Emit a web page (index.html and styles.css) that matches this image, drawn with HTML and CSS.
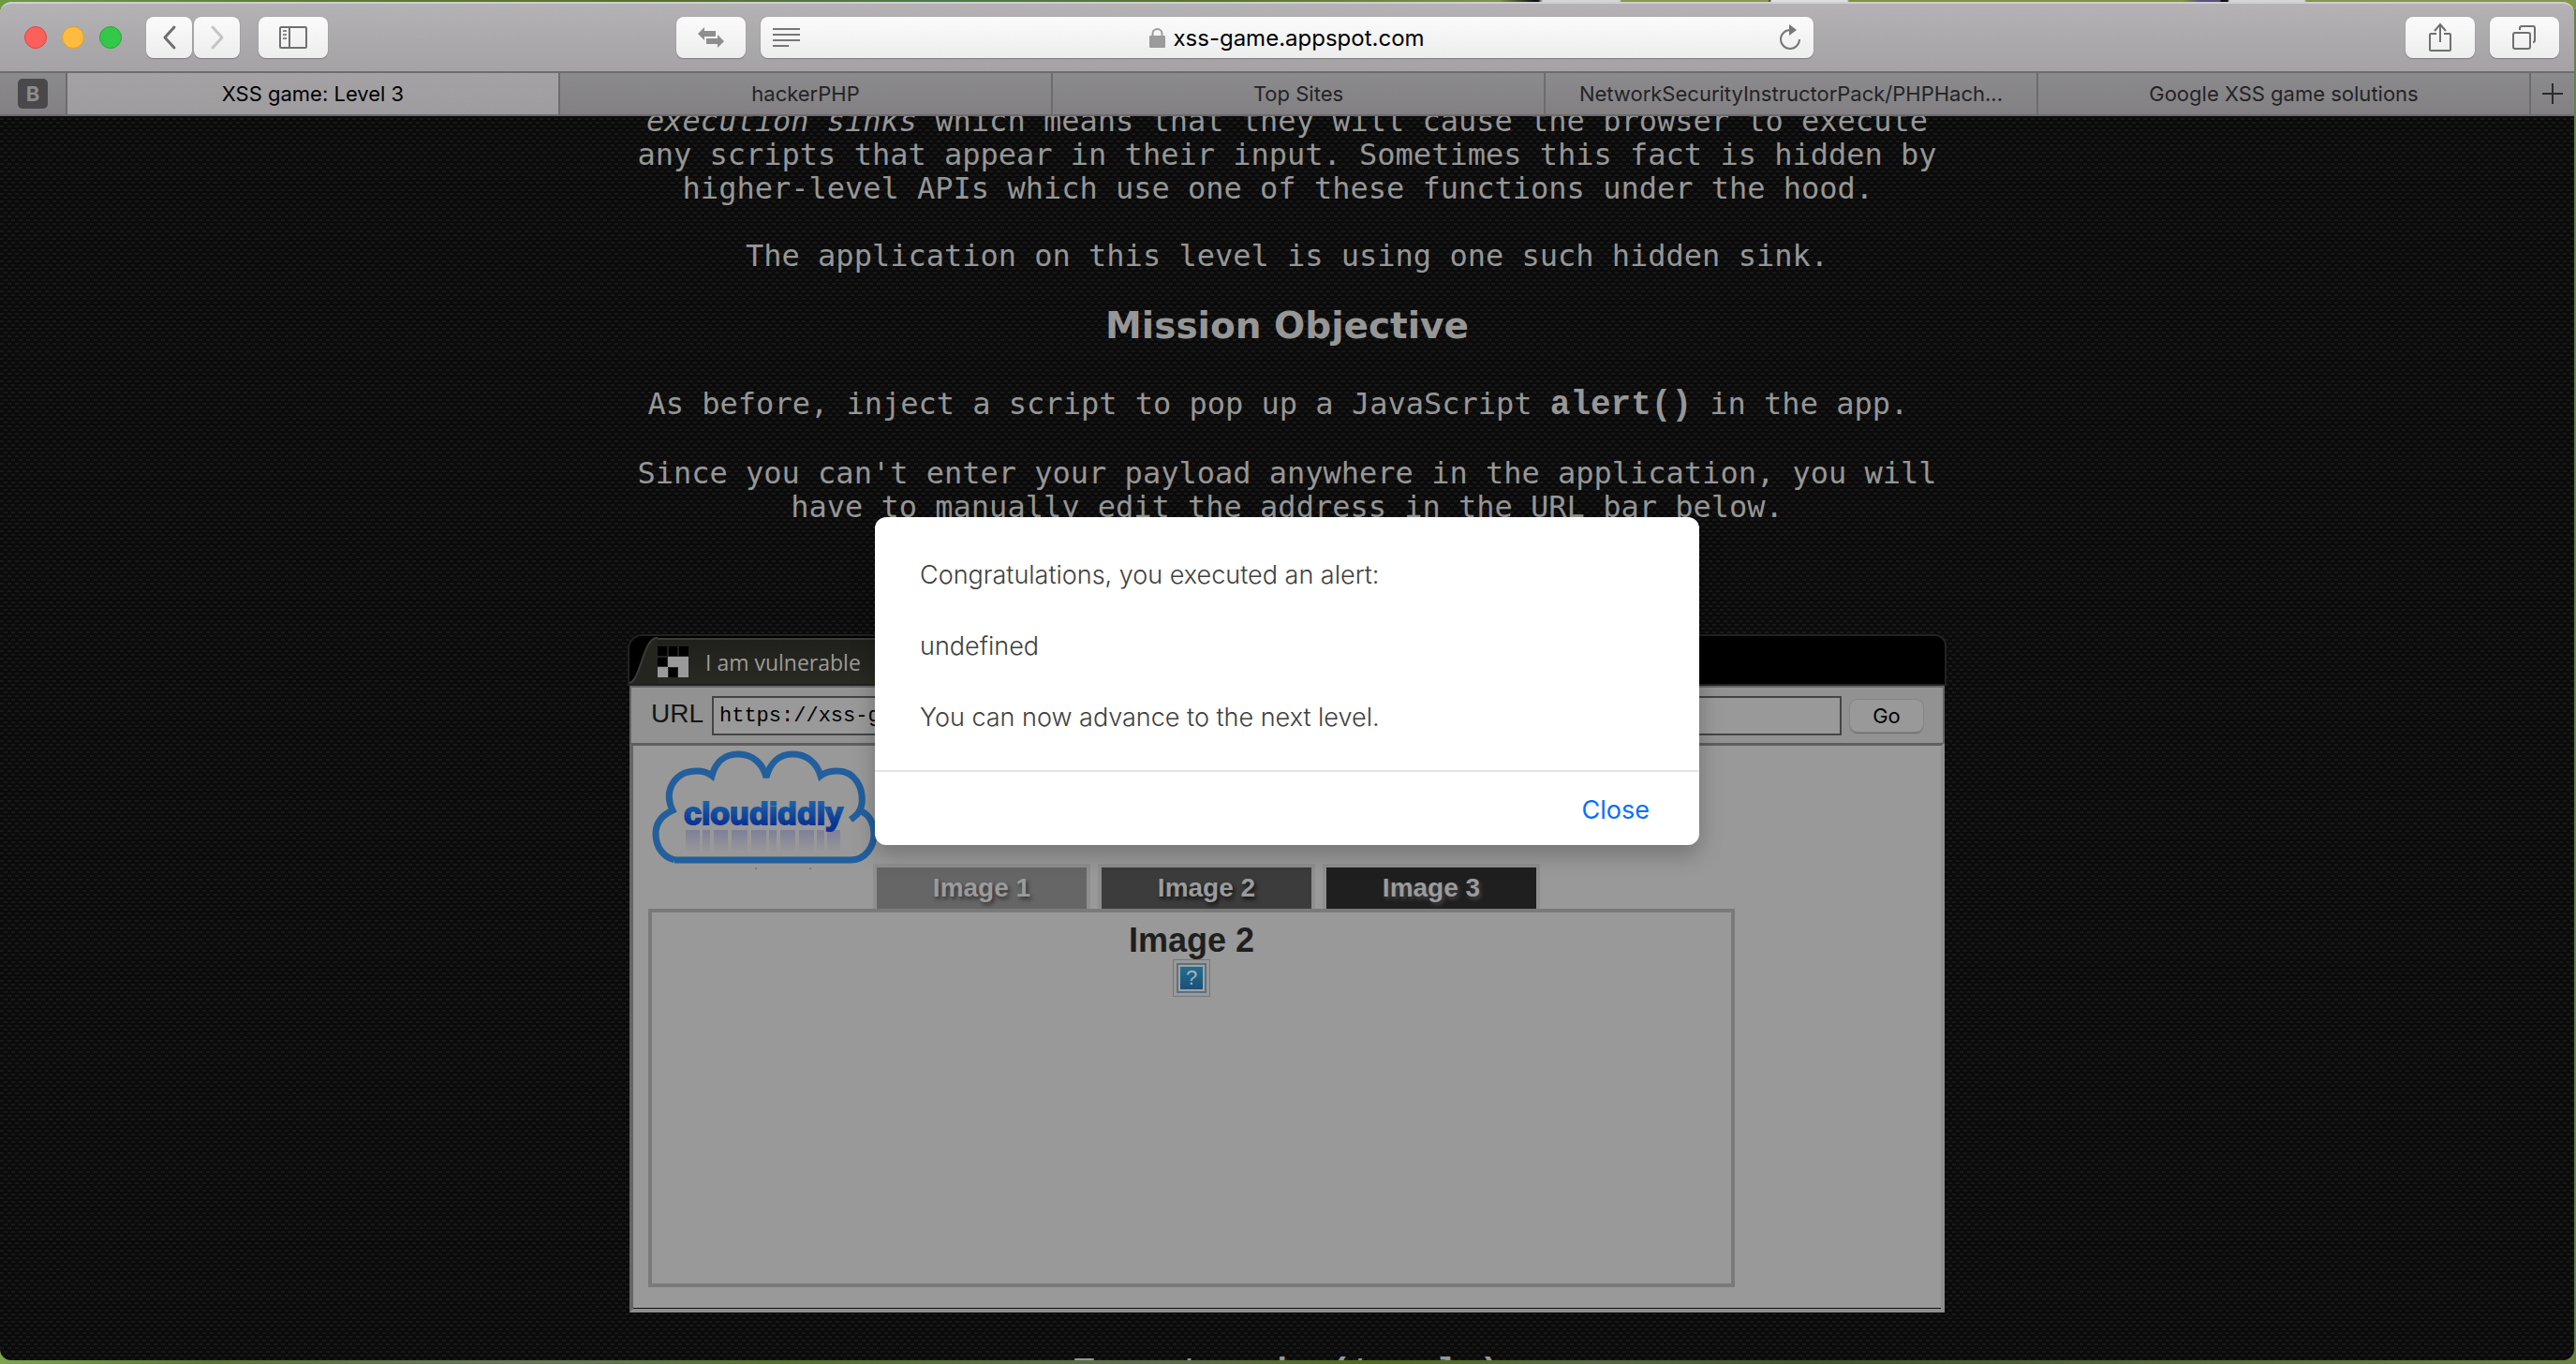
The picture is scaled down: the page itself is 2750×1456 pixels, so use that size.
FILE: index.html
```html
<!DOCTYPE html>
<html lang="en">
<head>
<meta charset="utf-8">
<title>XSS game: Level 3</title>
<link rel="stylesheet" href="styles.css">
</head>
<body>
<div class="window">
  <header class="toolbar">
    <div class="toolbar-side">
      <div class="lights">
        <span class="light light-close"></span>
        <span class="light light-min"></span>
        <span class="light light-max"></span>
      </div>
      <div class="nav">
        <button class="tool tool-nav" type="button" aria-label="Back">
          <svg width="16" height="26" viewBox="0 0 16 26" fill="none" stroke="#6f6f6f" stroke-width="3" stroke-linecap="round" stroke-linejoin="round"><path d="M13 2 3 13l10 11"/></svg>
        </button>
        <button class="tool tool-nav" type="button" aria-label="Forward">
          <svg width="16" height="26" viewBox="0 0 16 26" fill="none" stroke="#c4c4c4" stroke-width="3" stroke-linecap="round" stroke-linejoin="round"><path d="m3 2 10 11L3 24"/></svg>
        </button>
      </div>
      <button class="tool" type="button" aria-label="Show sidebar">
        <svg width="30" height="24" viewBox="0 0 30 24" fill="none" stroke="#6f6f6f" stroke-width="2"><rect x="1" y="1" width="28" height="22" rx="1"/><path d="M11 1v22"/><path d="M4 5h4M4 9h4M4 13h4" stroke="#8a8a8a"/></svg>
      </button>
      <button class="tool tool-swap" type="button" aria-label="Switch page">
        <svg width="28" height="22" viewBox="0 0 28 22" fill="#8e8e8e"><path d="M0 7 7 0v4h12v6H7v4z"/><path d="M28 15l-7 7v-4H9v-6h12V8z"/></svg>
      </button>
    </div>
    <div class="address">
      <button class="address-icon" type="button" aria-label="Reader view">
        <svg width="29" height="20" viewBox="0 0 29 20" stroke="#777" stroke-width="2"><path d="M0 1h29M0 7h29M0 13h29M0 19h17"/></svg>
      </button>
      <label class="address-text">
        <svg width="17" height="21" viewBox="0 0 17 21"><path d="M3.500 9V6a5 5 0 0 1 10 0v3" fill="none" stroke="#9b9b9b" stroke-width="2"/><rect y="8" width="17" height="13" rx="1" fill="#9b9b9b"/></svg>
        <input class="address-input" type="text" value="xss-game.appspot.com" aria-label="Address">
      </label>
      <button class="address-icon address-reload" type="button" aria-label="Reload">
        <svg width="24" height="28" viewBox="0 0 24 28" fill="none" stroke="#777" stroke-width="2"><path d="M12 6A10 10 0 1 0 22 16"/><path d="M11 0l8 6-8 6z" fill="#777" stroke="none"/></svg>
      </button>
    </div>
    <div class="toolbar-side toolbar-right">
      <button class="tool" type="button" aria-label="Share">
        <svg width="24" height="32" viewBox="0 0 24 32" fill="none" stroke="#6f6f6f" stroke-width="2"><path d="M8 12H2q-1 0-1 1v16q0 1 1 1h20q1 0 1-1V13q0-1-1-1h-6M12 21V3M6 9l6-7 6 7"/></svg>
      </button>
      <button class="tool" type="button" aria-label="Show all tabs">
        <svg width="26" height="26" viewBox="0 0 26 26" fill="none" stroke="#6f6f6f" stroke-width="2"><rect x="1" y="8" width="18" height="17" rx="2"/><path d="M8 5V3q0-2 2-2h12q2 0 2 2v13q0 2-2 2"/></svg>
      </button>
    </div>
  </header>

  <nav class="tabs">
    <a class="tab tab-pinned" href="#"><span class="pin">B</span></a>
    <a class="tab tab-active" href="#">XSS game: Level 3</a>
    <a class="tab" href="#">hackerPHP</a>
    <a class="tab" href="#">Top Sites</a>
    <a class="tab" href="#">NetworkSecurityInstructorPack/PHPHach...</a>
    <a class="tab" href="#">Google XSS game solutions</a>
    <button class="tab tab-new" type="button" aria-label="New tab">
      <svg width="22" height="22" viewBox="0 0 22 22" stroke="#2a2a2c" stroke-width="2"><path d="M11 0v22M0 11h22"/></svg>
    </button>
  </nav>

  <div class="viewport">
    <main class="page">
      <p><i>execution sinks</i> which means that they will cause the browser to execute any scripts that appear in their input. Sometimes this fact is hidden by higher-level APIs which use one of these functions under the hood.&nbsp;</p>
      <p>The application on this level is using one such hidden sink.</p>
      <h2 class="mission">Mission Objective</h2>
      <p>As before, inject a script to pop up a JavaScript <code class="call">alert()</code> in the app.&nbsp;</p>
      <p>Since you can't enter your payload anywhere in the application, you will have to manually edit the address in the URL bar below.</p>

      <section class="browser">
        <div class="browser-top">
          <svg class="slant" width="30" height="50" viewBox="0 0 30 50"><path d="M0 50C12 46 14 4 28 1h2v49z" fill="#25251f"/><path d="M0 49C12 46 14 4 28 1h2" fill="none" stroke="#3b3b37" stroke-width="2"/></svg>
          <div class="browser-tab">
            <svg width="33" height="33" viewBox="0 0 33 33"><path fill="#000" d="M0 0h10v10H0zM12 0h9v10h-9zM23 0h10v10H23zM0 12h10v9H0zM12 23h9v10h-9z"/><path fill="#9a9a9a" d="M11 11h11v11H11zM22 11h11v11H22zM0 22h11v11H0zM22 22h11v11H22z"/></svg>
            <span>I am vulnerable</span>
          </div>
        </div>
        <form class="urlbar">
          <label class="url-label" for="url">URL</label>
          <input class="url-input" id="url" type="text" value="https://xss-game.appspot.com/level3/frame">
          <button class="go" type="button">Go</button>
        </form>
        <div class="frame">
          <div class="frame-head">
            <svg class="logo" width="240" height="142" viewBox="0 0 240 142">
              <defs>
                <linearGradient id="word" x1="0" y1="0" x2="0" y2="1"><stop offset="0.200" stop-color="#1c62a8"/><stop offset="0.800" stop-color="#0a3494"/></linearGradient>
                <linearGradient id="fade" x1="0" y1="0" x2="0" y2="1"><stop offset="0" stop-color="#77799a" stop-opacity="0.800"/><stop offset="1" stop-color="#77799a" stop-opacity="0"/></linearGradient>
              </defs>
              <g fill="none" stroke="#235f9c" stroke-width="7" stroke-linejoin="miter">
                <path d="M28 122C14 118 8 106 8 94C8 82 15 74 26 69C16 48 28 27 52 27C58 27 63 28 68 32C72 17 82 9 96 9C112 9 123 20 126 34C130 18 140 9 154 9C170 9 180 19 184 32C189 28 196 27 202 27C220 27 230 44 228 62C227 70 223 74 216 79"/>
                <path d="M228 70C237 75 241 84 241 94C241 108 232 122 216 122H28"/>
              </g>
              <path fill="url(#fade)" d="M40 90h15v24H40zM58 90h8v24h-8zM70 90h15v24H70zM89 90h17v24H89zM110 90h16v24h-16zM129 90h8v24h-8zM141 90h16v24h-16zM161 90h16v24h-16zM180 90h8v24h-8zM191 90h14v24h-14z"/>
              <text class="logo-word" x="123" y="84" text-anchor="middle">cloudiddly</text>
              <path fill="#777a8c" d="M114 130h2v2h-2zM172 130h2v2h-2z"/>
            </svg>
            <a class="shot shot-1" href="#1">Image 1</a>
            <a class="shot shot-2" href="#2">Image 2</a>
            <a class="shot shot-3" href="#3">Image 3</a>
          </div>
          <div class="panel">
            <h3 class="panel-title">Image 2</h3>
            <span class="missing"><span class="missing-mark">?</span></span>
          </div>
        </div>
      </section>
      <h2 class="target">Target code (toggle)</h2>
    </main>

    <div class="overlay">
      <div class="dialog" role="alertdialog" aria-label="Alert">
        <div class="dialog-body">
          <p>Congratulations, you executed an alert:</p>
          <p>undefined</p>
          <p>You can now advance to the next level.</p>
        </div>
        <div class="dialog-foot"><button class="close" type="button">Close</button></div>
      </div>
    </div>
  </div>
</div>
</body>
</html>
```
FILE: styles.css
```css
* { box-sizing: border-box; }

body {
  margin: 0;
  background:
    linear-gradient(90deg, #6d9a45 0, #5a7f35 300px, #56722d 700px, #4b7a4c 1000px, #57752c 1300px, #7d9450 1600px, #111 1638px 1642px, #d5d5d5 1647px 1729px, #8a9a4e 1731px 1888px, #311 1889px, #ddd 1891px 1972px, #7f9440 1974px 2330px, #574f7c 2350px 2370px, #111 2371px 2378px, #d5d5d5 2380px 2460px, #86964c 2462px) 0 0 / 100% 10px no-repeat,
    linear-gradient(90deg, #7da34c, #5a7430 8%, #66745a 20%, #55702a 30%, #5c6b4a 45%, #51691c 53%, #56683f 62%, #3f5228 70%, #6a7f44);
  font-family: Inter, "Liberation Sans", sans-serif;
}

button, input { font: inherit; color: inherit; margin: 0; padding: 0; border: 0; background: none; }
svg { display: block; flex: none; overflow: visible; }

.window {
  display: flex;
  flex-direction: column;
  height: 100vh;
  border: solid transparent;
  border-width: 2px 2px 4px 0;
}

/* Toolbar */
.toolbar {
  display: grid;
  grid-template-columns: minmax(0, 1fr) minmax(0, 1124px) minmax(0, 1fr);
  gap: 16px;
  align-items: center;
  height: 76px;
  padding: 0 16px;
  border-top: 2px solid #cfced0;
  border-bottom: 2px solid #6e6d70;
  border-radius: 12px 12px 0 0;
  background: linear-gradient(#b4b2b5, #a4a2a5);
}
.toolbar-side { display: flex; align-items: center; gap: 20px; }
.toolbar-right { justify-content: flex-end; gap: 16px; }
.lights { display: flex; gap: 16px; margin: 0 6px 0 10px; }
.light { width: 24px; height: 24px; border-radius: 50%; border: 1px solid; }
.light-close { background: #fc605b; border-color: #e0443f; }
.light-min { background: #fdbc40; border-color: #dfa023; }
.light-max { background: #34c84a; border-color: #24a835; }
.nav { display: flex; gap: 2px; }
.tool {
  display: flex;
  align-items: center;
  justify-content: center;
  width: 74px;
  height: 44px;
  border-radius: 8px;
  background: linear-gradient(#fbfbfb, #ededed);
  box-shadow: 0 1px 1px #7d7d7d, 0 0 1px #8d8d8d;
}
.tool-nav { width: 49px; }
.tool-swap { margin-left: auto; }
.address {
  display: grid;
  grid-template-columns: 1fr auto 1fr;
  align-items: center;
  height: 44px;
  padding: 0 13px;
  border-radius: 8px;
  background: linear-gradient(#fbfbfb, #ededed);
  box-shadow: 0 1px 1px #7d7d7d, 0 0 1px #8d8d8d;
}
.address-icon { justify-self: start; }
.address-reload { justify-self: end; }
.address-text { display: flex; align-items: center; gap: 8px; }
.address-input { field-sizing: content; font-size: 24px; color: #000; }

/* Tab strip */
.tabs {
  display: flex;
  height: 46px;
  border-bottom: 2px solid #6c6b6d;
  background: linear-gradient(#8b8a8c, #828083);
}
.tab {
  display: flex;
  flex: 1 1 0;
  align-items: center;
  justify-content: center;
  border-right: 2px solid #6c6b6d;
  font-size: 22px;
  color: #232325;
  text-decoration: none;
  white-space: nowrap;
}
.tab-pinned { flex: 0 0 72px; }
.tab-active { background: linear-gradient(#a4a2a5, #9e9c9f); color: #000; }
.tab-new { flex: 0 0 46px; border-right: 0; }
.pin {
  width: 32px;
  border-radius: 5px;
  background: #49484a;
  color: #8d8c8e;
  font-size: 22px;
  font-weight: 700;
  line-height: 32px;
  text-align: center;
}

/* Page */
.viewport {
  position: relative;
  flex: 1;
  min-height: 0;
  overflow: hidden;
  border-radius: 0 0 12px 12px;
  background:
    conic-gradient(from 270deg at 4px 2px, #191919 90deg, transparent 0) 0 2px / 8px 8px,
    conic-gradient(from 270deg at 4px 2px, #191919 90deg, transparent 0) 4px 6px / 8px 8px,
    #0b0b0b;
}
.page {
  max-width: 1408px;
  margin: -13px auto 0;
  color: #969696;
  font: 32px/36px "DejaVu Sans Mono", monospace;
  text-align: center;
}
.page p { margin: 0 0 36px; }
.mission {
  margin: 0 0 44px;
  font: 700 39px/42px "DejaVu Sans", sans-serif;
}
.call { font: 700 36px/36px "Liberation Mono", monospace; }
.target { margin: 46px 0 0; font: 700 38px/38px "Liberation Mono", monospace; }

/* Simulated browser */
.browser { margin-top: 118px; }
.browser-top {
  display: flex;
  align-items: flex-end;
  height: 55px;
  border: 2px solid #222;
  border-radius: 16px 12px 0 0;
  background: #000;
}
.browser-tab {
  display: flex;
  align-items: center;
  gap: 18px;
  flex: 0 0 360px;
  height: 49px;
  border-top: 2px solid #3b3b37;
  background: linear-gradient(#1f1f1b, #2a2a24);
  color: #9b9b97;
  font: 23px/32px "Open Sans", sans-serif;
}
.urlbar {
  display: flex;
  align-items: center;
  gap: 9px;
  height: 61px;
  margin: 0 2px;
  padding: 0 21px;
  border: 2px solid #666;
  border-bottom: 0;
  background: #929292;
  color: #151515;
  font: 28px/32px "Liberation Sans", sans-serif;
}
.url-label { padding-bottom: 3px; }
.url-input {
  flex: 1;
  height: 42px;
  padding: 2px 6px 0;
  border: 2px solid #444;
  background: #999;
  color: #000;
  font: 22px/32px "Liberation Mono", monospace;
}
.go {
  width: 78px;
  height: 34px;
  border-radius: 8px;
  background: #999;
  box-shadow: 0 0 0 1px #858585, 0 2px 1px #6c6c6c;
  color: #000;
  font: 22px/32px Inter, sans-serif;
}
.frame {
  margin: 0 2px;
  padding: 0 16px 23px;
  border: 4px solid;
  border-top-width: 3px;
  border-color: #5f5f5f #8e8e8e #8e8e8e #666;
  background: #999;
  box-shadow: inset 0 -1px #111;
  font-family: "Liberation Sans", sans-serif;
}
.frame-head { display: flex; align-items: flex-end; gap: 8px; height: 174px; }
.logo { align-self: flex-start; margin-right: -8px; }
.logo-word {
  font: 700 34px "Liberation Sans", sans-serif;
  fill: url(#word);
  stroke: url(#word);
  stroke-width: 2px;
}
.shot {
  flex: 0 0 232px;
  border: 4px solid #8f8f8f;
  border-bottom: 0;
  color: #9b9b9b;
  font-size: 28px;
  font-weight: 700;
  line-height: 44px;
  text-decoration: none;
  text-shadow: 2px 3px 4px #333;
}
.shot-1 { background: #666; }
.shot-2 { background: #3c3c3c; text-shadow: 2px 3px 4px #111; }
.shot-3 { background: #1f1f1f; text-shadow: 2px 3px 4px #444; }
.panel {
  display: flex;
  flex-direction: column;
  align-items: center;
  max-width: 1160px;
  height: 404px;
  padding-top: 10px;
  border: 4px solid #7a7a7a;
  color: #1f1f1f;
}
.panel-title { margin: 0; font-size: 36px; line-height: 40px; }
.missing { padding: 3px; border: 1px solid #777; }
.missing-mark {
  display: block;
  width: 32px;
  height: 32px;
  border: 2px solid #5c7187;
  outline: 2px solid #a2a2a2;
  outline-offset: -4px;
  background: linear-gradient(#24718f, #1a4d78);
  color: #a5b3bc;
  font-size: 22px;
  line-height: 28px;
}

/* Alert */
.overlay {
  position: absolute;
  inset: 0;
  display: flex;
  align-items: flex-start;
  justify-content: center;
  padding-top: 428px;
}
.dialog {
  flex: 0 1 880px;
  border-radius: 12px;
  background: #fff;
  color: #404040;
  font-size: 27px;
  line-height: 38px;
  box-shadow: 0 10px 24px rgba(0, 0, 0, 0.250);
}
.dialog-body {
  display: flex;
  flex-direction: column;
  gap: 38px;
  padding: 43px 48px 37px;
  border-bottom: 2px solid #e4e4e4;
  font-weight: 300;
}
.dialog-body p { margin: 0; }
.dialog-foot { display: flex; justify-content: flex-end; padding: 22px 53px 18px; }
.close { color: #0a6ff8; }
```
